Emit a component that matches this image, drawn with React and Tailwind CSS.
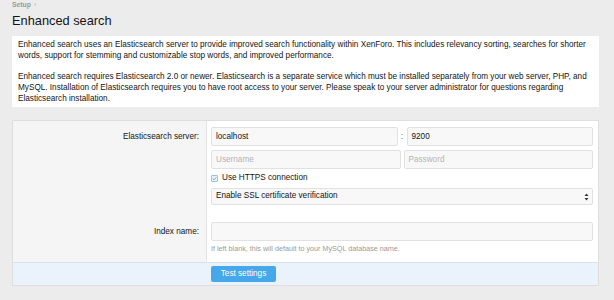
import React from "react";

function Input({ value, placeholder, className = "" }) {
  return (
    <div
      className={
        "h-[19px] bg-[#f8f8f8] border border-[#e1e1e1] rounded-[2px] px-[4px] text-[8.2px] leading-[17px] " +
        className
      }
    >
      {value ? (
        <span className="text-[#141414]">{value}</span>
      ) : (
        <span className="text-[#b4b4b4]">{placeholder}</span>
      )}
    </div>
  );
}

export default function App() {
  return (
    <div className="w-[614px] h-[300px] bg-[#ececec] pl-[12px] pr-[15px] font-['Liberation_Sans',Arial,sans-serif] text-[#141414] overflow-hidden">
      <div className="h-[9px] text-[6.8px] leading-[9px] font-bold text-[#9a9a9a] flex items-center gap-[3px]">
        <span>Setup</span>
        <span className="font-normal text-[#b0b0b0]">›</span>
      </div>
      <div className="mt-[3px] text-[12.8px] leading-[18px]">Enhanced search</div>

      <div className="mt-[6px] bg-white px-[6px] py-[3px] text-[8.2px] leading-[11px]">
        <p>
          Enhanced search uses an Elasticsearch server to provide improved search functionality within XenForo. This
          includes relevancy sorting, searches for shorter words, support for stemming and customizable stop words, and
          improved performance.
        </p>
        <p className="mt-[10px]">
          Enhanced search requires Elasticsearch 2.0 or newer. Elasticsearch is a separate service which must be
          installed separately from your web server, PHP, and MySQL. Installation of Elasticsearch requires you to have
          root access to your server. Please speak to your server administrator for questions regarding Elasticsearch
          installation.
        </p>
      </div>

      <div className="mt-[13px] border border-[#dedede] bg-white">
        {/* Row 1 */}
        <div className="flex">
          <div className="w-[194px] shrink-0 bg-[#f5f5f5] border-r border-[#e3e3e3] pt-[6px] pr-[7px] text-right text-[8.2px] leading-[19px]">
            Elasticsearch server:
          </div>
          <div className="flex-1 pl-[4px] pr-[5px] pt-[6px] pb-[6px]">
            <div className="flex items-center">
              <Input value="localhost" className="flex-1" />
              <div className="w-[9px] text-center text-[8.2px] leading-[19px] text-[#666]">:</div>
              <Input value="9200" className="flex-1" />
            </div>
            <div className="mt-[4px] flex gap-[3px]">
              <Input placeholder="Username" className="flex-1" />
              <Input placeholder="Password" className="flex-1" />
            </div>
            <div className="mt-[4px] h-[11px] flex items-center gap-[4px] text-[8.2px]">
              <div className="w-[7px] h-[7px] border border-[#9cc3e3] bg-[#eaf3fb] rounded-[1px] flex items-center justify-center">
                <svg width="5" height="5" viewBox="0 0 10 10">
                  <path d="M1.5 5.2 L4 7.6 L8.6 2.4" stroke="#4a9ad8" strokeWidth="1.6" fill="none" />
                </svg>
              </div>
              <span>Use HTTPS connection</span>
            </div>
            <div className="mt-[4px] h-[17px] bg-[#f8f8f8] border border-[#e1e1e1] rounded-[2px] pl-[4px] pr-[3px] flex items-center justify-between text-[8.2px]">
              <span>Enable SSL certificate verification</span>
              <svg width="5" height="8" viewBox="0 0 5 8">
                <path d="M2.5 0.5 L4.5 3 L0.5 3 Z" fill="#333" />
                <path d="M2.5 7.5 L4.5 5 L0.5 5 Z" fill="#333" />
              </svg>
            </div>
          </div>
        </div>
        {/* Row 2 */}
        <div className="flex">
          <div className="w-[194px] shrink-0 bg-[#f5f5f5] border-r border-[#e3e3e3] pt-[11px] pr-[7px] text-right text-[8.2px] leading-[19px]">
            Index name:
          </div>
          <div className="flex-1 pl-[4px] pr-[5px] pt-[11px] pb-[9px]">
            <Input placeholder="" />
            <div className="mt-[3px] text-[7.2px] leading-[9px] text-[#9a9a9a]">
              If left blank, this will default to your MySQL database name.
            </div>
          </div>
        </div>
        {/* Footer */}
        <div className="h-[23px] border-t border-[#dbe3ea] bg-[#eaf3fc] pl-[198px] pt-[3px]">
          <div className="w-[65px] h-[16px] bg-[#47a7eb] rounded-[2px] text-white text-[8.2px] leading-[16px] text-center">
            Test settings
          </div>
        </div>
      </div>
    </div>
  );
}
